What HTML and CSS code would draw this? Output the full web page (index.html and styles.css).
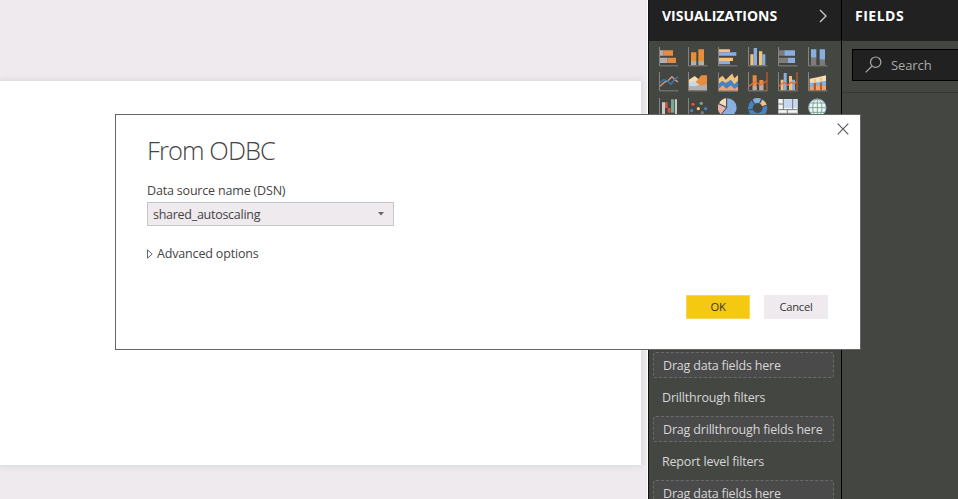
FILE: index.html
```html
<!DOCTYPE html>
<html lang="en">
<head>
<meta charset="utf-8">
<title>From ODBC</title>
<link rel="stylesheet" href="styles.css">
</head>
<body>
<div class="app">
  <main class="canvas"><div class="page"></div></main>

  <aside class="visualizations">
    <header class="pane-head">
      <h2 class="pane-title viz-title">VISUALIZATIONS</h2>
      <svg class="chevron" viewBox="0 0 8 14"><path d="M1 1l6 6-6 6"/></svg>
    </header>
    <div class="icons">
      <svg viewBox="0 0 60 60"><path class="g" d="M2 10h12v16H2zM2 32h23v16H2z"/><path class="o" d="M14 10h28v16H14zM25 32h26v16H25z"/><path class="axis" d="M1.5 0v56.5H58"/></svg>
      <svg viewBox="0 0 60 60"><path class="g" d="M9 42h16v13H9zM31 42h17v13H31z"/><path class="o" d="M9 16h16v26H9zM31 7h17v35H31z"/><path class="axis" d="M1.5 0v56.5H58"/></svg>
      <svg viewBox="0 0 60 60"><path class="y" d="M2 7h34v9H2zM2 32h43v10H2z"/><path class="b" d="M2 16h53v10H2zM2 42h34v10H2z"/><path class="axis" d="M1.5 0v56.5H58"/></svg>
      <svg viewBox="0 0 60 60"><path class="y" d="M7 22h10v33H7zM33 13h10v42H33z"/><path class="b" d="M17 3h10v52H17zM43 22h9v33h-9z"/><path class="axis" d="M1.5 0v56.5H58"/></svg>
      <svg viewBox="0 0 60 60"><path class="d" d="M2 10h17v16H2zM2 32h28v16H2z"/><path class="b" d="M19 10h32v16H19zM30 32h21v16H30z"/><path class="axis" d="M1.5 0v56.5H58"/></svg>
      <svg viewBox="0 0 60 60"><path class="b" d="M9 7h16v25H9zM35 7h16v31H35z"/><path class="d" d="M9 32h16v23H9zM35 38h16v17H35z"/><path class="axis" d="M1.5 0v56.5H58"/></svg>

      <svg viewBox="0 0 60 60"><path class="line pink" d="M3 43l13-12 10-4 13-13 8 9 10 7"/><path class="line blue" d="M3 32l11-9 10 3 12 11 9-13 12-10"/><path class="axis" d="M1.5 0v56.5H58"/></svg>
      <svg viewBox="0 0 60 60"><path class="cream" d="M2 24l18-12 18 15v10H2z"/><path class="o" d="M20 34l20-24h17v45H20z"/><path class="g" d="M2 32h22l16 9 17-4v18H2z"/><path class="pale" d="M2 32l18-5 14 12-14 4-18-2z"/><path class="axis" d="M1.5 0v56.5H58"/></svg>
      <svg viewBox="0 0 62 60"><path class="y" d="M2 20l12-9 10 12L44 4l7 14 11-10v48H2z"/><path class="bb" d="M2 36l11-10 11 7 16-10 11 14 11-11v30H2z"/><path class="salmon" d="M2 51l13-11 11 11 14-11 11 12 11-8v12H2z"/><path class="axis" d="M1.5 0v58.5H62"/></svg>
      <svg viewBox="0 0 60 60"><path class="o" d="M14 10h12v45H14zM34 24h12v31H34z"/><path class="g" d="M14 42h12v13H14zM34 36h12v19H34z"/><path class="line red" d="M2 43l19-13 18 9 18-13"/><path class="line rust" d="M57 0v57"/><path class="axis" d="M1.5 0v56.5H58"/></svg>
      <svg viewBox="0 0 60 60"><path class="y" d="M8 23h9v32H8zM33 12h9v43h-9z"/><path class="b" d="M17 3h9v52h-9zM42 23h9v32h-9z"/><path class="line red" d="M2 43l16-12 11 9 10-9 10 4 8-7"/><path class="line rust" d="M57 0v57"/><path class="axis" d="M1.5 0v56.5H58"/></svg>
      <svg viewBox="0 0 60 60"><path class="rustfill" d="M5 32h49v23H5z"/><path class="cream" d="M5 20l27-5 22-5v18l-22 5H5z"/><path class="y" d="M17 22h7v11h-7zM36 17h6v13h-6z"/><path class="b" d="M5 32h12v12H5zM24 31h12v11H24zM42 28h12v14H42z"/><path class="salmon" d="M5 44h12v11H5zM24 42h12v13H24zM42 42h12v13H42z"/><path class="axis" d="M1.5 0v56.5H58"/></svg>

      <svg viewBox="0 0 60 60"><path class="silver" d="M9 13h9v42H9zM48 4h6v51h-6z"/><path class="redfill" d="M18 13h8v17h9v14h-9V30h-8z"/><path class="teal" d="M36 4h10v40H36z"/><path class="axis" d="M1.5 0v56.5H58"/></svg>
      <svg viewBox="0 0 60 60"><circle class="redfill" cx="15" cy="19" r="5"/><circle class="teal" cx="40" cy="16" r="5"/><circle class="y" cx="31" cy="32" r="5"/><circle class="bb" cx="11" cy="38" r="5"/><circle class="bb" cx="53" cy="32" r="5"/><circle class="d" cx="43" cy="44" r="5"/><path class="axis" d="M1.5 0v56.5H58"/></svg>
      <svg viewBox="0 0 60 60"><circle class="b" cx="28" cy="29" r="28"/><path class="cream" d="M24 25V1A27 27 0 0 0 4 16z"/><path class="salmonlight" d="M24 29L2 18a27 27 0 0 0 7 31z"/><path class="cut" d="M26 0v29L2 17M26 29L9 50"/></svg>
      <svg viewBox="0 0 60 60"><circle class="ring" cx="29" cy="30" r="22"/><path class="ring ring-blue" d="M18 10a22 22 0 0 1 19-1"/><path class="ring ring-yellow" d="M40 11a22 22 0 0 1 10 12"/><path class="cut" d="M11 4l8 14M41 2l-6 13M58 21l-15 5M0 37l17-4"/></svg>
      <svg viewBox="0 0 60 60"><path class="white" d="M1 3h58v54H1z"/><path class="paleblue" d="M17 4h28v26H17zM45 4h13v26H45z"/><path class="grid" d="M16 3v33M1 18h15M1 35h57M44 3v32M28 35v22M1 46h27M28 46h30"/></svg>
      <svg viewBox="0 0 60 60"><circle class="white globe-edge" cx="28" cy="29" r="26"/><path class="globe" d="M28 3v52M3 29h50M7 15h42M7 43h42"/><ellipse class="globe" cx="28" cy="29" rx="14" ry="26"/></svg>
    </div>
    <section class="filters">
      <div class="drop">Drag data fields here</div>
      <h3 class="filter-title">Drillthrough filters</h3>
      <div class="drop drill">Drag drillthrough fields here</div>
      <h3 class="filter-title">Report level filters</h3>
      <div class="drop">Drag data fields here</div>
    </section>
  </aside>

  <aside class="fields">
    <header class="pane-head"><h2 class="pane-title fields-title">FIELDS</h2></header>
    <div class="search-row">
      <div class="search">
        <svg class="magnifier" viewBox="0 0 17 17"><circle cx="10.7" cy="6.2" r="5.2"/><path d="M7 10L.7 16.3"/></svg>
        <span class="search-label">Search</span>
      </div>
    </div>
  </aside>
</div>

<div class="dialog" role="dialog">
  <svg class="close" viewBox="0 0 12 12"><path d="M.7.7l10.6 10.6M11.3.7L.7 11.3"/></svg>
  <h1 class="dialog-title">From ODBC</h1>
  <div class="dsn-label">Data source name (DSN)</div>
  <div class="select"><span class="select-value">shared_autoscaling</span><svg class="caret" viewBox="0 0 6 4"><path d="M0 0h6L3 3.5z"/></svg></div>
  <div class="advanced"><svg class="expander" viewBox="0 0 6 10"><path d="M.5.8v8.4L5.2 5z"/></svg><span class="advanced-label">Advanced options</span></div>
  <div class="actions"><button class="btn ok">OK</button><button class="btn cancel">Cancel</button></div>
</div>
</body>
</html>
```
FILE: styles.css
```css
* { box-sizing: border-box; }
body {
  margin: 0;
  width: 958px;
  height: 499px;
  overflow: hidden;
  font: 12.5px/18px "Open Sans", "Noto Sans", sans-serif;
  letter-spacing: -.18px;
}
h1, h2, h3 { margin: 0; font-weight: 400; }
svg { display: block; flex: none; }

.app { display: flex; height: 499px; background: #eeeaee; }
.canvas { width: 648px; padding-top: 81px; border-right: 1px solid #fff; }
.page { width: 641px; height: 384px; background: #fff; box-shadow: 0 0 6px 1px #d8d6d8; }

.visualizations {
  width: 194px;
  border-left: 1px solid #111;
  border-right: 1px solid #000;
  background: #444642;
  overflow: hidden;
}
.pane-head {
  display: flex;
  align-items: center;
  justify-content: space-between;
  height: 41px;
  padding: 0 14px 9px 13px;
  background: #212121;
}
.pane-title { color: #fff; font-weight: 700; font-size: 14px; white-space: nowrap; }
.viz-title { letter-spacing: .02px; }
.fields-title { letter-spacing: .5px; }
.chevron { width: 8px; height: 14px; fill: none; stroke: #ccc; stroke-width: 1.3; }

.icons {
  display: grid;
  grid-template-columns: repeat(6, 29.8px);
  grid-auto-rows: 25.3px;
  padding: 6px 0 0 9.6px;
  height: 308px;
  align-content: start;
}
.icons svg { width: 20px; height: 20px; }
.axis { fill: none; stroke: #85827f; stroke-width: 3; }
.g { fill: #b3afb0; }
.d { fill: #7d7b7c; }
.o { fill: #e78c3e; }
.y { fill: #f0c27c; }
.b { fill: #88afde; }
.bb { fill: #4583c4; }
.cream { fill: #f7dcb4; }
.pale { fill: #c6dbe7; }
.salmon { fill: #f1a06f; }
.salmonlight { fill: #eeb1a3; }
.white { fill: #f3f5f5; }
.silver { fill: #c9c9c7; }
.redfill { fill: #d8553d; }
.rustfill { fill: #b0602f; }
.teal { fill: #74a994; }
.paleblue { fill: #c5d8ef; }
.line { fill: none; stroke-width: 4; }
.pink { stroke: #d99c8e; }
.blue { stroke: #4178b4; }
.red { stroke: #e56c43; }
.rust { stroke: #b45f2d; stroke-width: 4; }
.cut { fill: none; stroke: #444642; stroke-width: 3; }
.ring { fill: none; stroke: #4583c4; stroke-width: 14; }
.ring-blue { stroke: #88afde; }
.ring-yellow { stroke: #f0c27c; }
.grid { fill: none; stroke: #777; stroke-width: 3; }
.globe { fill: none; stroke: #77a896; stroke-width: 3; }
.globe-edge { stroke: #8eb5dd; stroke-width: 3; }

.filters { padding: 3px 7px 0 4px; color: #d6d6d6; }
.drop {
  height: 26px;
  padding: 4px 0 0 9px;
  border: 1px dashed #696b68;
  border-radius: 3px;
  background: #4a4a4a;
  line-height: 18px;
  white-space: nowrap;
}
.filter-title { height: 38px; padding: 11px 0 0 9px; font-size: 12.5px; line-height: 18px; }

.fields { flex: 1; background: #444642; }
.fields .pane-head { padding-left: 13px; }
.search-row { height: 52px; padding: 8px 0 0 10px; border-bottom: 1px solid #353735; }
.search {
  display: flex;
  align-items: center;
  height: 32px;
  padding-left: 12px;
  border: 1px solid #000;
  border-right: 0;
  background: #212121;
  color: #aaa;
}
.search-label { font-size: 13px; letter-spacing: -.1px; }
.magnifier { width: 17px; height: 17px; margin: -2px 9px 0 0; fill: none; stroke: #aaa; stroke-width: 1.2; }

.dialog {
  position: absolute;
  left: 115px;
  top: 114px;
  width: 746px;
  height: 236px;
  padding: 19px 32px 0 31px;
  border: 1px solid #666;
  background: #fff;
  color: #444;
}
.close { position: absolute; right: 11px; top: 8px; width: 12px; height: 12px; stroke: #555; stroke-width: 1.1; }
.dialog-title { height: 48px; font-size: 25.5px; line-height: 32px; font-weight: 300; letter-spacing: -.9px; }
.dsn-label { height: 20px; }
.select {
  display: flex;
  align-items: center;
  justify-content: space-between;
  width: 247px;
  height: 24px;
  padding: 0 9px 0 5px;
  border: 1px solid #c8c6c9;
  background: #eeeaee;
}
.select-value { padding-top: 2px; letter-spacing: -.27px; }
.caret { width: 6px; height: 4px; fill: #666; }
.advanced { display: flex; align-items: center; gap: 4px; margin-top: 18px; height: 20px; }
.advanced-label { letter-spacing: -.16px; margin-top: -1px; }
.expander { width: 6px; height: 10px; fill: none; stroke: #555; stroke-width: .9; }
.actions { display: flex; justify-content: flex-end; gap: 14px; margin-top: 31px; }
.btn {
  width: 64px;
  height: 24px;
  padding: 0 0 1px;
  border: 0;
  background: #eeeaee;
  color: #333;
  font: 11.2px/23px "Open Sans", "Noto Sans", sans-serif;
  letter-spacing: -.25px;
}
.ok { background: #f5c911; border: 1px solid #f8d651; line-height: 21px; }
```
